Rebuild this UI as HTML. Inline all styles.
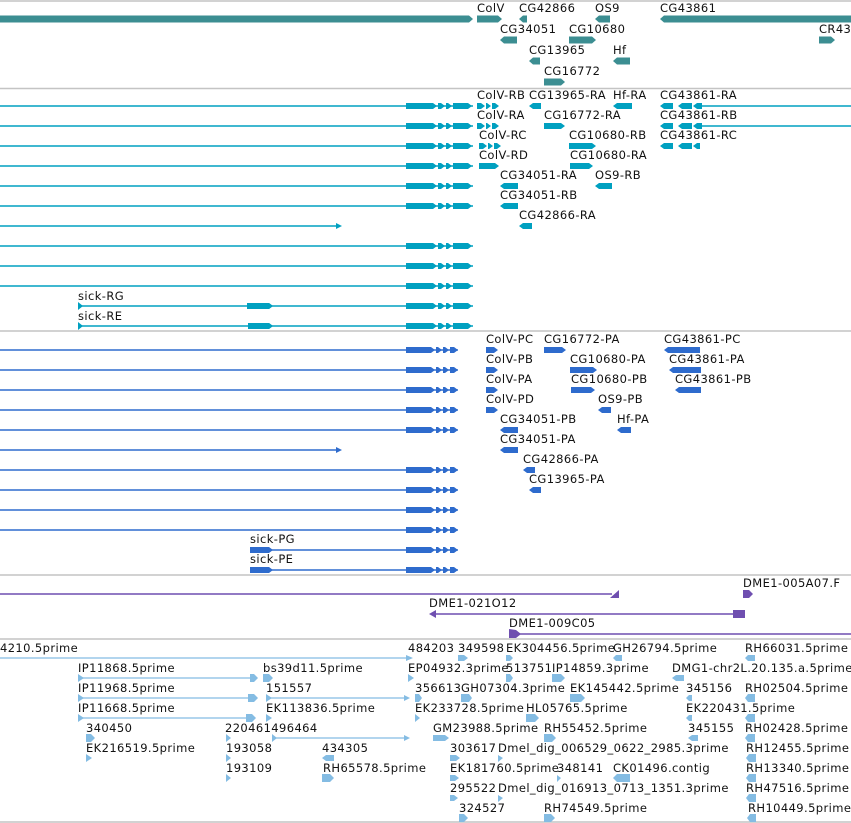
<!DOCTYPE html>
<html><head><meta charset="utf-8"><style>
html,body{margin:0;padding:0;background:#fff;width:851px;height:823px;overflow:hidden}
svg{display:block}
text{font-family:"DejaVu Sans","Liberation Sans",sans-serif;font-size:11.5px;letter-spacing:0.4px;fill:#111}
</style></head><body>
<svg width="851" height="823" viewBox="0 0 851 823" xmlns="http://www.w3.org/2000/svg">
<defs>
<g id="tx" fill="#00a0c0"><path d="M0 0H473" stroke="#00a0c0" stroke-width="1.4"/><path d="M406 -3H433L437 0L433 3H406Z M438 -3H441L445 0L441 3H438Z M446 -3H448L452 0L448 3H446Z M453 -3H468L472 0L468 3H453Z"/></g>
<g id="pr" fill="#2e6bcd"><path d="M0 0H458" stroke="#2e6bcd" stroke-width="1.4"/><path d="M406 -3H431L435 0L431 3H406Z M436 -3H438L442 0L438 3H436Z M443 -3H445L449 0L445 3H443Z M450 -3H454L458 0L454 3H450Z"/></g>
<g id="colv" fill="#00a0c0"><path d="M0 -3H4L8 0L4 3H0Z M9 -3H10L14 0L10 3H9Z M15 -3H18L22 0L18 3H15Z"/></g>
<g id="cg43" fill="#00a0c0"><path d="M40 0H191" stroke="#00a0c0" stroke-width="1.4"/><path d="M13 -3H4L0 0L4 3H13Z M32 -3H22L18 0L22 3H32Z M42 -3H37L33 0L37 3H42Z"/></g>
</defs>
<g stroke="#c4c4c4" stroke-width="1.5">
<path d="M0 1H851M0 88.5H851M0 331H851M0 575H851M0 639H851M0 822H851"/>
</g>
<g fill="#3c8e92">
<path d="M0 15.5H469L473 19L469 22.5H0Z M477 15.5H498L502 19L498 22.5H477Z M527 15.5H523L519 19L523 22.5H527Z M610 15.5H599L595 19L599 22.5H610Z M851 15.5H664L660 19L664 22.5H851Z"/>
<path d="M517 36.5H504L500 40L504 43.5H517Z M569 36.5H592L596 40L592 43.5H569Z M819 36.5H831L835 40L831 43.5H819Z"/>
<path d="M540 57.5H533L529 61L533 64.5H540Z M630 57.5H617L613 61L617 64.5H630Z"/>
<path d="M544 78.5H561L565 82L561 85.5H544Z"/>
</g>
<text x="477" y="12">ColV</text><text x="519" y="12">CG42866</text><text x="595" y="12">OS9</text><text x="660" y="12">CG43861</text>
<text x="500" y="33">CG34051</text><text x="569" y="33">CG10680</text><text x="819" y="33">CR43</text>
<text x="529" y="54">CG13965</text><text x="613" y="54">Hf</text>
<text x="544" y="75">CG16772</text>
<use href="#tx" y="106"/><use href="#tx" y="126"/><use href="#tx" y="146"/><use href="#tx" y="166"/><use href="#tx" y="186"/><use href="#tx" y="206"/>
<use href="#tx" y="246"/><use href="#tx" y="266"/><use href="#tx" y="286"/>
<g fill="#00a0c0" stroke="#00a0c0">
<path d="M0 226H340" stroke-width="1.4"/><path d="M336 223L342 226L336 229Z" stroke="none"/>
<path stroke="none" d="M247 303H269L273 306L269 309H247Z M248 323H269L273 326L269 329H248Z"/>
</g>
<use href="#tx" y="306"/><use href="#tx" y="326"/>
<rect x="0" y="300" width="78" height="30" fill="#fff"/>
<path d="M78 302V310L83 306Z M78 322V330L83 326Z M247 303H269L273 306L269 309H247Z M248 323H269L273 326L269 329H248Z" fill="#00a0c0"/>
<text x="78" y="300">sick-RG</text><text x="78" y="320">sick-RE</text>
<use href="#colv" x="477" y="106"/><use href="#colv" x="477" y="126"/><use href="#colv" x="479" y="146"/>
<g fill="#00a0c0">
<path d="M479 163H495L499 166L495 169H479Z"/>
<path d="M541 103H533L529 106L533 109H541Z M632 103H617L613 106L617 109H632Z M544 123H561L565 126L561 129H544Z"/>
<path d="M569 143H592L596 146L592 149H569Z M570 163H589L593 166L589 169H570Z"/>
<path d="M518 183H504L500 186L504 189H518Z M612 183H599L595 186L599 189H612Z M518 203H504L500 206L504 209H518Z M532 223H523L519 226L523 229H532Z"/>
</g>
<use href="#cg43" x="660" y="106"/><use href="#cg43" x="660" y="126"/><use href="#cg43" x="660" y="146"/>
<rect x="700" y="140" width="151" height="12" fill="#fff"/>
<text x="477" y="99">ColV-RB</text><text x="529" y="99">CG13965-RA</text><text x="613" y="99">Hf-RA</text><text x="660" y="99">CG43861-RA</text>
<text x="477" y="119">ColV-RA</text><text x="544" y="119">CG16772-RA</text><text x="660" y="119">CG43861-RB</text>
<text x="479" y="139">ColV-RC</text><text x="569" y="139">CG10680-RB</text><text x="660" y="139">CG43861-RC</text>
<text x="479" y="159">ColV-RD</text><text x="570" y="159">CG10680-RA</text>
<text x="500" y="179">CG34051-RA</text><text x="595" y="179">OS9-RB</text>
<text x="500" y="199">CG34051-RB</text>
<text x="519" y="219">CG42866-RA</text>
<use href="#pr" y="350"/><use href="#pr" y="370"/><use href="#pr" y="390"/><use href="#pr" y="410"/><use href="#pr" y="430"/>
<use href="#pr" y="470"/><use href="#pr" y="490"/><use href="#pr" y="510"/><use href="#pr" y="530"/><use href="#pr" y="550"/><use href="#pr" y="570"/>
<rect x="0" y="544" width="250" height="30" fill="#fff"/>
<g fill="#2e6bcd">
<path d="M0 450H340" stroke="#2e6bcd" stroke-width="1.4"/><path d="M336 447L342 450L336 453Z"/>
<path d="M250 547H269L273 550L269 553H250Z M250 567H269L273 570L269 573H250Z"/>
<path d="M486 347H494L498 350L494 353H486Z M486 367H494L498 370L494 373H486Z M486 387H494L498 390L494 393H486Z M486 407H494L498 410L494 413H486Z"/>
<path d="M544 347H562L566 350L562 353H544Z M570 367H593L597 370L593 373H570Z M571 387H591L595 390L591 393H571Z"/>
<path d="M700 347H668L664 350L668 353H700Z M701 367H673L669 370L673 373H701Z M701 387H679L675 390L679 393H701Z"/>
<path d="M611 407H602L598 410L602 413H611Z M631 427H621L617 430L621 433H631Z"/>
<path d="M518 427H504L500 430L504 433H518Z M518 447H504L500 450L504 453H518Z M535 467H527L523 470L527 473H535Z M541 487H533L529 490L533 493H541Z"/>
</g>
<text x="486" y="343">ColV-PC</text><text x="544" y="343">CG16772-PA</text><text x="664" y="343">CG43861-PC</text>
<text x="486" y="363">ColV-PB</text><text x="570" y="363">CG10680-PA</text><text x="669" y="363">CG43861-PA</text>
<text x="486" y="383">ColV-PA</text><text x="571" y="383">CG10680-PB</text><text x="675" y="383">CG43861-PB</text>
<text x="486" y="403">ColV-PD</text><text x="598" y="403">OS9-PB</text>
<text x="500" y="423">CG34051-PB</text><text x="617" y="423">Hf-PA</text>
<text x="500" y="443">CG34051-PA</text>
<text x="523" y="463">CG42866-PA</text>
<text x="529" y="483">CG13965-PA</text>
<text x="250" y="543">sick-PG</text><text x="250" y="563">sick-PE</text>
<g fill="#6f4fb0" stroke="#6f4fb0">
<path d="M0 594H612M433 614H736M515 634H851" stroke-width="1.4"/>
<path stroke="none" d="M619 590V598H610Z M743 590H749L753 594L749 598H743Z M429 614L436 610V618Z M733 610H745V618H733Z M509 629V638H516L521 634L516 630Z"/>
</g>
<text x="743" y="587">DME1-005A07.F</text><text x="429" y="607">DME1-021O12</text><text x="509" y="627">DME1-009C05</text>
<g fill="#84bce3" stroke="#84bce3">
<path stroke-width="1.2" d="M0 658H410M78 678H252M78 698H252M78 718H250M266 698H408M272 738H408"/>
<path stroke="none" d="M406 655L413 658L406 661Z M250 674H254L258 678L254 682H250Z M248 694H254L258 698L254 702H248Z M246 714H252L256 718L252 722H246Z M404 695L410 698L404 701Z M404 735L410 738L404 741Z
M78 674V682L84 678Z M78 694V702L84 698Z M78 714V722L84 718Z M263 674H269L273 678L269 682H263Z M266 694V702L272 698Z M266 714V722L272 718Z M272 734V742L277 738Z
M86 734H91L95 738L91 742H86Z M86 754V762L92 758Z M226 734V742L231 738Z M226 754V762L231 758Z M226 774V782L231 778Z M322 774H330L334 778L330 782H322Z M334 755H326L322 758L326 761H334Z
M458 655H464L468 658L464 661H458Z M506 655H510L513 658L510 661H506Z M622 655H616L613 658L616 661H622Z M755 655H748L745 658L748 661H755Z
M408 674V682L414 678Z M506 674H510L513 678L510 682H506Z M552 674H561L565 678L561 682H552Z M684 675H676L672 678L676 681H684Z
M415 694H419L422 698L419 702H415Z M461 694H469L472 698L469 702H461Z M570 694H581L585 698L581 702H570Z M692 695H689L686 698L689 701H692Z M755 694H748L745 698L748 702H755Z
M415 714V722L420 718Z M526 714H535L539 718L535 722H526Z M692 715H689L686 718L689 721H692Z M755 714H748L745 718L748 722H755Z
M433 735H445L449 738L445 741H433Z M544 734H552L556 738L552 742H544Z M698 735H692L688 738L692 741H698Z M755 734H748L745 738L748 742H755Z
M450 755H456L460 758L456 761H450Z M498 755V762L503 758Z M756 754H749L746 758L749 762H756Z
M450 775H455L459 778L455 781H450Z M557 775V782L561 778Z M630 774H617L613 778L617 782H630Z M756 774H749L746 778L749 782H756Z
M450 795H454L458 798L454 801H450Z M498 795V802L503 798Z M756 794H749L746 798L749 802H756Z
M459 814H464L468 818L464 822H459Z M544 814H551L555 818L551 822H544Z M756 814H750L747 818L750 822H756Z"/>
</g>
<text x="0" y="652">4210.5prime</text><text x="408" y="652">484203</text><text x="458" y="652">349598</text><text x="506" y="652">EK304456.5prime</text><text x="613" y="652">GH26794.5prime</text><text x="745" y="652">RH66031.5prime</text>
<text x="78" y="672">IP11868.5prime</text><text x="263" y="672">bs39d11.5prime</text><text x="408" y="672">EP04932.3prime</text><text x="506" y="672">513751</text><text x="552" y="672">IP14859.3prime</text><text x="672" y="672">DMG1-chr2L.20.135.a.5prime</text>
<text x="78" y="692">IP11968.5prime</text><text x="266" y="692">151557</text><text x="415" y="692">356613</text><text x="461" y="692">GH07304.3prime</text><text x="570" y="692">EK145442.5prime</text><text x="686" y="692">345156</text><text x="745" y="692">RH02504.5prime</text>
<text x="78" y="712">IP11668.5prime</text><text x="266" y="712">EK113836.5prime</text><text x="415" y="712">EK233728.5prime</text><text x="526" y="712">HL05765.5prime</text><text x="686" y="712">EK220431.5prime</text>
<text x="86" y="732">340450</text><text x="225" y="732">220461496464</text><text x="433" y="732">GM23988.5prime</text><text x="544" y="732">RH55452.5prime</text><text x="688" y="732">345155</text><text x="745" y="732">RH02428.5prime</text>
<text x="86" y="752">EK216519.5prime</text><text x="226" y="752">193058</text><text x="322" y="752">434305</text><text x="450" y="752">303617</text><text x="498" y="752">Dmel_dig_006529_0622_2985.3prime</text><text x="746" y="752">RH12455.5prime</text>
<text x="226" y="772">193109</text><text x="323" y="772">RH65578.5prime</text><text x="450" y="772">EK181760.5prime</text><text x="557" y="772">348141</text><text x="613" y="772">CK01496.contig</text><text x="746" y="772">RH13340.5prime</text>
<text x="450" y="792">295522</text><text x="498" y="792">Dmel_dig_016913_0713_1351.3prime</text><text x="746" y="792">RH47516.5prime</text>
<text x="459" y="812">324527</text><text x="544" y="812">RH74549.5prime</text><text x="748" y="812">RH10449.5prime</text>
</svg>
</body></html>
